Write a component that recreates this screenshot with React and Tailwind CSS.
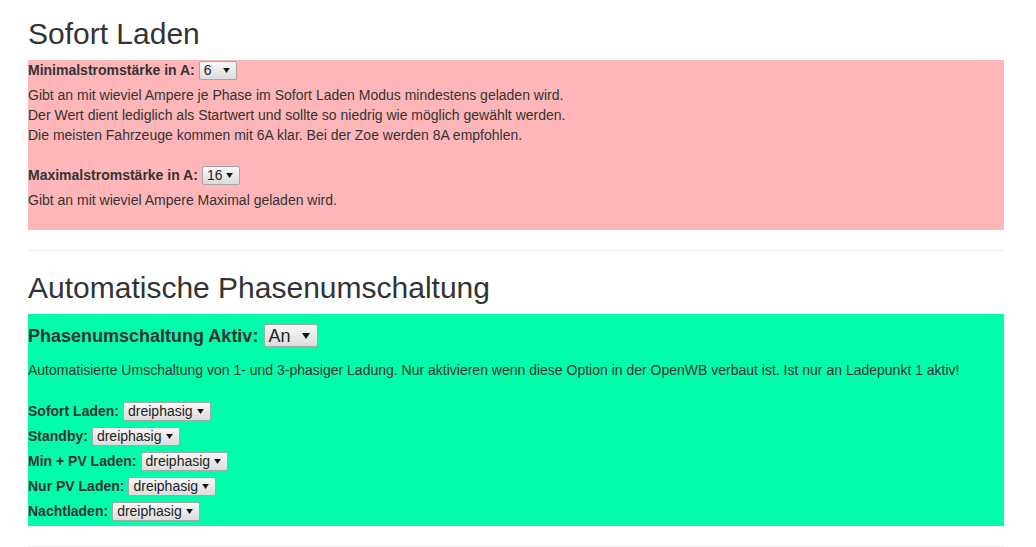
import React from 'react';

const Arrow = ({ size = 'sm' }) => (
  <svg width={size === 'lg' ? 8 : 7} height={size === 'lg' ? 6 : 5} viewBox="0 0 8 6" className="shrink-0">
    <polygon points="0,0 8,0 4,6" fill="#111" />
  </svg>
);

// Nachgebauter Dropdown im alten Chrome-Look
const Select = ({ value, width, large }) => (
  <span
    className={`inline-flex items-center justify-between border border-[#a6a6a6] rounded-[2px] bg-linear-to-b from-[#f8f8f8] to-[#dcdcdc] text-[#222] align-middle ${
      large ? 'h-[23px] text-[18px] pl-[3px] pr-[7px]' : 'h-[19px] text-[14px] pl-[4px] pr-[6px] gap-[4px]'
    }`}
    style={width ? { width } : undefined}
  >
    <span className="leading-none">{value}</span>
    <Arrow size={large ? 'lg' : 'sm'} />
  </span>
);

const Row = ({ label, children }) => (
  <div className="flex items-center h-[20px] gap-[4px]">
    <span className="font-bold">{label}</span>
    {children}
  </div>
);

const phasenModi = ['Sofort Laden:', 'Standby:', 'Min + PV Laden:', 'Nur PV Laden:', 'Nachtladen:'];

export default function App() {
  return (
    <div className="min-h-screen bg-white pl-[28px] pr-[32px] text-[14px] leading-[20px] text-[#333] font-['Liberation_Sans',Arial,sans-serif]">
      <h2 className="pt-[17px] mb-[10px] text-[30px] leading-[33px] font-normal">Sofort Laden</h2>
      <div className="bg-[#ffb6b8] pb-[20px]">
        <Row label="Minimalstromstärke in A:">
          <Select value="6" width={38} />
        </Row>
        <div className="mt-[5px]">
          <div>Gibt an mit wieviel Ampere je Phase im Sofort Laden Modus mindestens geladen wird.</div>
          <div>Der Wert dient lediglich als Startwert und sollte so niedrig wie möglich gewählt werden.</div>
          <div>Die meisten Fahrzeuge kommen mit 6A klar. Bei der Zoe werden 8A empfohlen.</div>
        </div>
        <div className="mt-[20px]">
          <Row label="Maximalstromstärke in A:">
            <Select value="16" width={38} />
          </Row>
        </div>
        <div className="mt-[5px]">Gibt an mit wieviel Ampere Maximal geladen wird.</div>
      </div>

      <hr className="my-[20px] border-0 border-t border-[#eeeeee]" />

      <h2 className="mb-[10px] text-[30px] leading-[33px] font-normal">Automatische Phasenumschaltung</h2>
      <div className="bg-[#00fdab] pt-[10px] pb-[5px]">
        <div className="flex items-center h-[23px] gap-[6px]">
          <span className="font-bold text-[18px]">Phasenumschaltung Aktiv:</span>
          <Select value="An" width={54} large />
        </div>
        <div className="mt-[13px]">
          Automatisierte Umschaltung von 1- und 3-phasiger Ladung. Nur aktivieren wenn diese Option in der OpenWB verbaut ist. Ist nur an Ladepunkt 1 aktiv!
        </div>
        <div className="mt-[21px] flex flex-col gap-[5px]">
          {phasenModi.map(m => (
            <Row key={m} label={m}>
              <Select value="dreiphasig" />
            </Row>
          ))}
        </div>
      </div>

      <hr className="mt-[20px] border-0 border-t border-[#eeeeee]" />
    </div>
  );
}
